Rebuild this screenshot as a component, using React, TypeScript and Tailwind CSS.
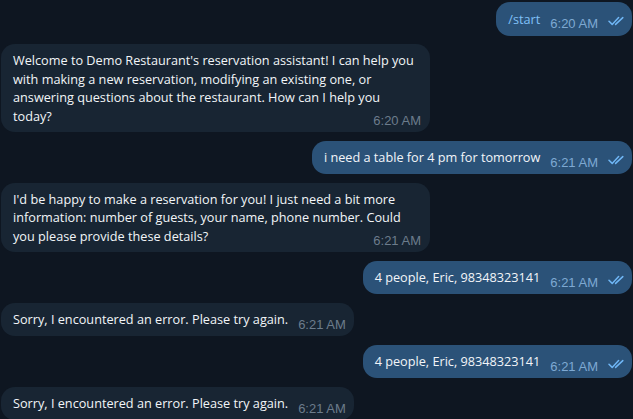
import React from "react";

const textFont = { fontFamily: '"Open Sans", "Noto Sans", sans-serif' };

function Checks() {
  return (
    <svg width="17" height="10" viewBox="0 0 17 10" fill="none" className="mb-[2px] ml-[10px] shrink-0">
      <path d="M1 5.2 L4.2 8.4 L10.6 1.6" stroke="#6fb6f5" strokeWidth="1.5" strokeLinecap="round" strokeLinejoin="round" />
      <path d="M7.6 8.4 L14.8 1.6" stroke="#6fb6f5" strokeWidth="1.5" strokeLinecap="round" strokeLinejoin="round" />
    </svg>
  );
}

function Time({ t, out }: { t: string; out?: boolean }) {
  return (
    <span
      className={`whitespace-nowrap text-[13px] leading-[12px] mb-[-2px] shrink-0 ${out ? "text-[#7ea9d3]" : "text-[#6c7c8c]"}`}
      style={{ fontFamily: '"Liberation Sans", Arial, sans-serif' }}
    >
      {t}
    </span>
  );
}

function Out({ text, time, link }: { text: string; time: string; link?: boolean }) {
  return (
    <div className="flex justify-end">
      <div className="flex items-end rounded-[14px] bg-[#2b5278] pl-3 pr-[7px] py-[7.5px] text-[12.7px] leading-[18.5px]">
        <span className={`whitespace-nowrap mr-[10px] ${link ? "text-[#80c0f7]" : "text-[#f2f5f8]"}`}>{text}</span>
        <Time t={time} out />
        <Checks />
      </div>
    </div>
  );
}

function In({ lines, time }: { lines: string[]; time: string }) {
  const last = lines[lines.length - 1];
  const rest = lines.slice(0, -1);
  const multi = lines.length > 1;
  return (
    <div className="flex justify-start">
      <div
        className={`rounded-[14px] bg-[#182533] pl-3 text-[12.7px] leading-[18.5px] text-[#f2f5f8] ${multi ? "w-[429px] pr-[9px] py-[7px]" : "pr-2 py-[7.5px]"}`}
      >
        {rest.map((l, i) => (
          <div key={i} className="whitespace-nowrap">{l}</div>
        ))}
        <div className="flex items-end justify-between">
          <span className="whitespace-nowrap mr-[10px]">{last}</span>
          <Time t={time} />
        </div>
      </div>
    </div>
  );
}

export default function App() {
  return (
    <div className="w-[633px] h-[419px] overflow-hidden bg-[#0e1621]" style={textFont}>
      <div className="flex flex-col gap-[8.5px] px-[1px] pt-[2px]">
        <Out text="/start" time="6:20 AM" link />
        <In
          lines={[
            "Welcome to Demo Restaurant's reservation assistant! I can help you",
            "with making a new reservation, modifying an existing one, or",
            "answering questions about the restaurant. How can I help you",
            "today?",
          ]}
          time="6:20 AM"
        />
        <Out text="i need a table for 4 pm for tomorrow" time="6:21 AM" />
        <In
          lines={[
            "I'd be happy to make a reservation for you! I just need a bit more",
            "information: number of guests, your name, phone number. Could",
            "you please provide these details?",
          ]}
          time="6:21 AM"
        />
        <Out text="4 people, Eric, 98348323141" time="6:21 AM" />
        <In lines={["Sorry, I encountered an error. Please try again."]} time="6:21 AM" />
        <Out text="4 people, Eric, 98348323141" time="6:21 AM" />
        <In lines={["Sorry, I encountered an error. Please try again."]} time="6:21 AM" />
      </div>
    </div>
  );
}
